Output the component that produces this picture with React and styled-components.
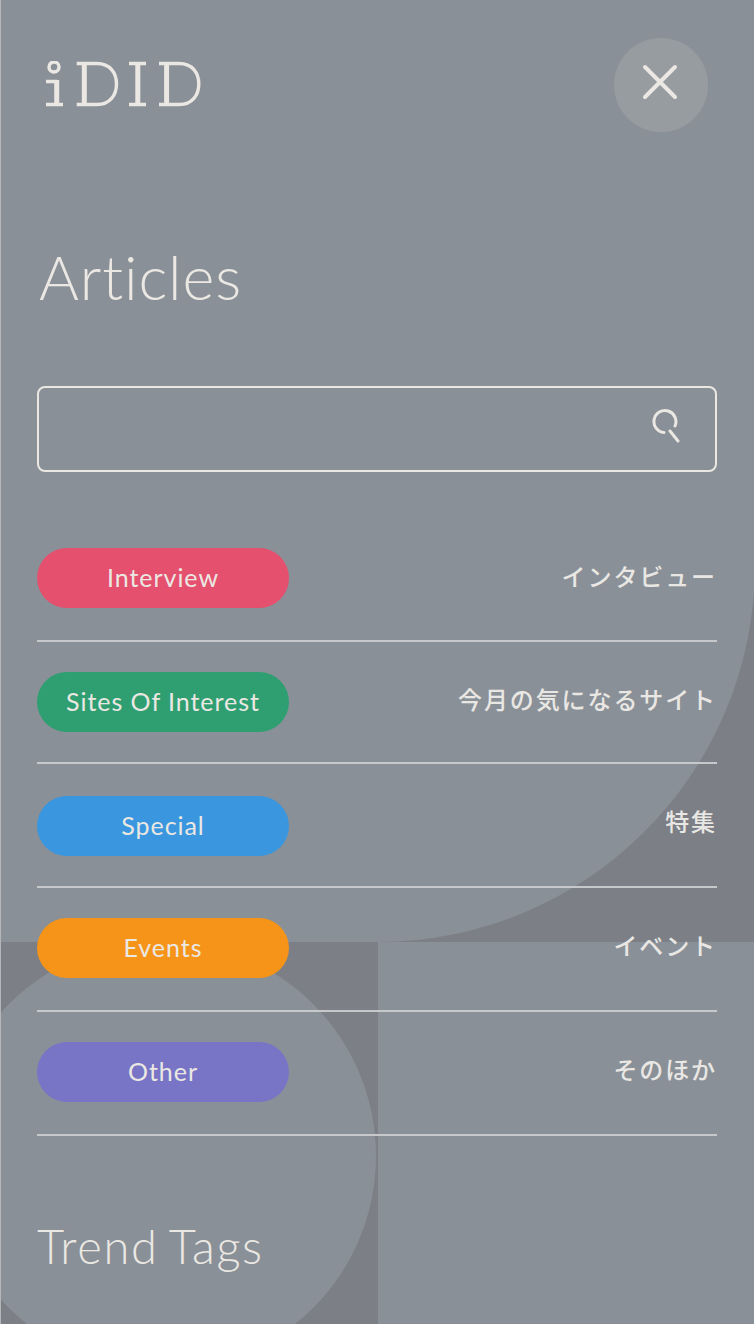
import React from 'react';
import styled, { createGlobalStyle } from 'styled-components';

const Global = createGlobalStyle`
  html, body { margin: 0; padding: 0; background: #fff; }
  body { font-family: "Lato", "Noto Sans CJK JP", sans-serif; font-variant-ligatures: none; }
`;

const Menu = styled.div`
  position: relative;
  width: 754px;
  height: 1324px;
  overflow: hidden;
  background: #7c7f86;
  color: #ebe8e3;
  border-left: 1px solid #b4b6ba;
  box-sizing: border-box;
`;

const BigShape = styled.div`
  position: absolute;
  left: 0; top: 0;
  width: 754px; height: 942px;
  background: #8a9097;
  border-bottom-right-radius: 377px;
`;
const Square = styled.div`
  position: absolute;
  left: 377px; top: 942px;
  width: 377px; height: 382px;
  background: #8a9097;
`;
const Circle = styled.div`
  position: absolute;
  left: -55px; top: 941px;
  width: 430px; height: 430px;
  border-radius: 50%;
  background: #8a9097;
`;

const Content = styled.div`
  position: relative;
  padding: 38px 37px 0 36px;
`;

const Header = styled.header`
  display: flex;
  justify-content: space-between;
  align-items: center;
  height: 94px;
  margin-right: 9px;
`;

const Logo = styled.svg`
  display: block;
  width: 158px;
  height: 48px;
  margin-left: 8px;
`;

const Close = styled.button`
  width: 94px; height: 94px;
  padding: 0 2px 7px 0;
  border: 0;
  border-radius: 50%;
  background: #979ca0;
  display: flex;
  align-items: center;
  justify-content: center;
`;

const Title = styled.h2`
  margin: 110px 0 0;
  font-weight: 300;
  font-size: 61px;
  line-height: 70px;
  letter-spacing: 0.9px;
  padding-left: 2px;
  color: #ebe8e3;
`;

const Search = styled.div`
  margin-top: 74px;
  height: 86px;
  box-sizing: border-box;
  border: 2px solid #ebe8e3;
  border-radius: 8px;
  display: flex;
  align-items: center;
  justify-content: flex-end;
  padding: 0 33px 8px 0;
`;

const List = styled.ul`
  list-style: none;
  margin: 76px 0 0;
  padding: 0;
`;

const Row = styled.li`
  display: flex;
  justify-content: space-between;
  align-items: center;
  padding: ${p => p.$pt}px 0 ${p => p.$pb}px;
  border-bottom: 2px solid #c6c8ca;
`;

const Pill = styled.span`
  width: 252px; height: 60px;
  padding-bottom: 3px;
  box-sizing: border-box;
  border-radius: 30px;
  background: ${p => p.$c};
  display: flex;
  align-items: center;
  justify-content: center;
  font-size: 25px;
  font-weight: 400;
  letter-spacing: 0.95px;
`;

const Jp = styled.span`
  font-family: "Noto Sans CJK JP", sans-serif;
  font-size: 24px;
  font-weight: 500;
  letter-spacing: 1.9px;
  margin-bottom: ${p => p.$up}px;
  color: #e9e7e3;
`;

const SubTitle = styled.h3`
  margin: 82px 0 0;
  font-weight: 300;
  font-size: 47px;
  line-height: 56px;
  letter-spacing: 1.7px;
  word-spacing: -3px;
`;

const rows = [
  ['Interview', 'インタビュー', '#e5506f', 0, 32, 5],
  ['Sites Of Interest', '今月の気になるサイト', '#2f9f72', 30, 30, 7],
  ['Special', '特集', '#3996df', 32, 30, 11],
  ['Events', 'イベント', '#f59419', 30, 32, 8],
  ['Other', 'そのほか', '#7875c7', 30, 32, 7],
];

const dPath = 'M31.700 2.500H52C65 2.500 71.500 12 71.500 23S65 43.500 52 43.500H31.700';

export default function App() {
  return (
    <Menu>
      <Global />
      <BigShape />
      <Square />
      <Circle />
      <Content>
        <Header>
          <Logo viewBox="0 0 158 48" role="img" aria-label="iDID" fill="none" stroke="#ebe8e3" strokeWidth="3.4">
            <circle cx="9" cy="6" r="5" />
            <path d="M1 20.500H12M1 43.500H18" />
            <path d="M11.700 19V44" strokeWidth="5" />
            <path d={dPath} />
            <path d="M39.300 2.500V43.500" strokeWidth="5" />
            <path d="M84 2.500H101M84 43.500H101" />
            <path d="M92.800 2.500V43.500" strokeWidth="5" />
            <path d={dPath} transform="translate(82.300 0)" />
            <path d="M121.600 2.500V43.500" strokeWidth="5" />
          </Logo>
          <Close aria-label="close">
            <svg width="36" height="36" viewBox="0 0 36 36" fill="none" stroke="#ebe8e3" strokeWidth="4" strokeLinecap="round">
              <path d="M3 3L33 33M33 3L3 33" />
            </svg>
          </Close>
        </Header>
        <Title>Articles</Title>
        <Search>
          <svg width="32" height="36" viewBox="0 0 32 36" fill="none" stroke="#ebe8e3" strokeWidth="3" strokeLinecap="round">
            <path d="M14 25.500A11 11 0 1 1 25 19M20 24L28 34" />
          </svg>
        </Search>
        <List>
          {rows.map(([a, b, c, pt, pb, up]) => (
            <Row key={a} $pt={pt} $pb={pb}>
              <Pill $c={c}>{a}</Pill>
              <Jp $up={up}>{b}</Jp>
            </Row>
          ))}
        </List>
        <SubTitle>Trend Tags</SubTitle>
      </Content>
    </Menu>
  );
}
